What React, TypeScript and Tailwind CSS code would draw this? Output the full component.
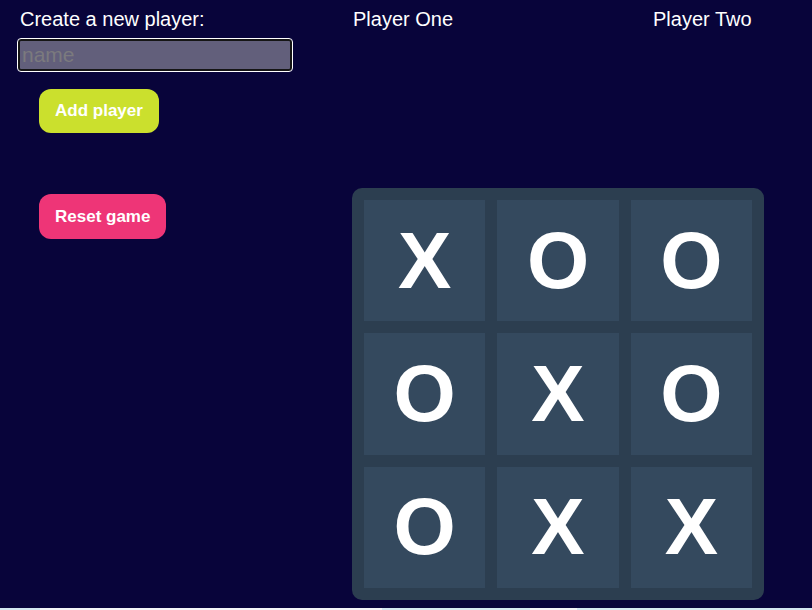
const board = ["X", "O", "O", "O", "X", "O", "O", "X", "X"];

export default function App() {
  return (
    <div className="font-['Liberation_Sans',Arial,sans-serif]">
      <div className="h-[608px] bg-[#08043a] text-white flex">
        <div className="w-[352px] pl-[18px] pt-[8px]">
          <p className="text-[20px] leading-[22px] pl-[2px]">Create a new player:</p>
          <input
            type="text"
            placeholder="name"
            className="mt-[9px] w-[274px] h-[32px] rounded-[3px] border-2 border-[#151515] outline outline-1 outline-white bg-[#625f7b] px-[2px] text-[21px] text-white placeholder:text-[#7b7a7e]"
          />
          <div className="pl-[21px]">
            <button className="mt-[18px] h-[44px] px-[16px] rounded-[12px] bg-[#cbe02d] text-white text-[17px] font-bold">
              Add player
            </button>
            <div className="h-[61px]" />
            <button className="h-[45px] px-[16px] rounded-[12px] bg-[#ee3577] text-white text-[17px] font-bold">
              Reset game
            </button>
          </div>
        </div>
        <div className="pt-[8px]">
          <div className="flex text-[20px] leading-[22px]">
            <p className="w-[300px] pl-[1px]">Player One</p>
            <p className="pl-[1px]">Player Two</p>
          </div>
          <div className="mt-[158px] w-[412px] h-[412px] rounded-[10px] bg-[#2c3e50] p-[12px] grid grid-cols-3 gap-[12px]">
            {board.map((v, i) => (
              <div
                key={i}
                className="bg-[#34495e] flex items-center justify-center text-[80px] font-bold leading-none"
              >
                {v}
              </div>
            ))}
          </div>
        </div>
      </div>
      <div className="h-[2px] flex">
        <div className="w-[40px] bg-[#d4e8f0]" />
        <div className="w-[342px] bg-[#f4f6f7]" />
        <div className="w-[148px] bg-[#d4e8f0]" />
        <div className="w-[47px] bg-[#f4f6f7]" />
        <div className="flex-1 bg-[#d4e8f0]" />
      </div>
    </div>
  );
}
